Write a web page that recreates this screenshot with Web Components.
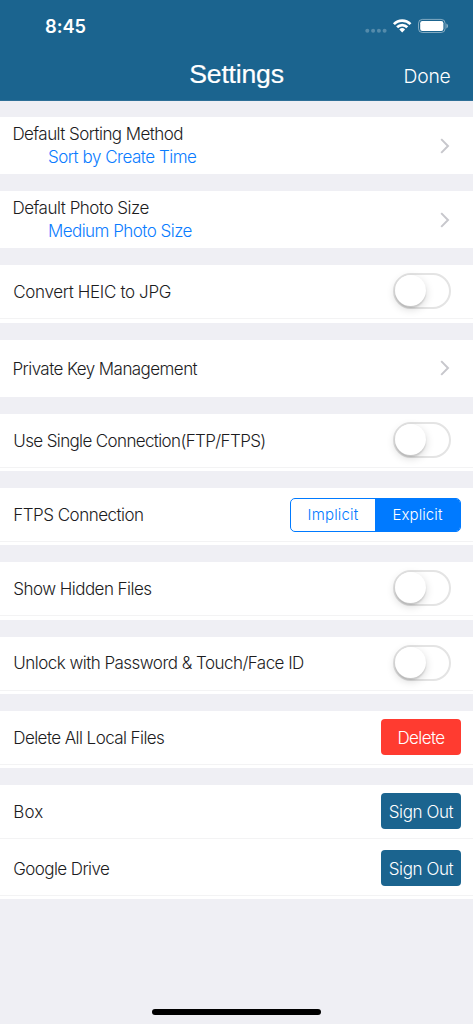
<!DOCTYPE html>
<html lang="en">
<head>
<meta charset="utf-8">
<title>Settings</title>
<style>
html, body { margin: 0; height: 100%; overflow: hidden; background: #efeff4; }
body { font-family: Inter, "Liberation Sans", sans-serif; color: #1c1c1e; }
</style>
</head>
<body>
<settings-screen></settings-screen>
<script>
const define = (name, html, init) => {
  const template = document.createElement('template');
  template.innerHTML = html;
  customElements.define(name, class extends HTMLElement {
    connectedCallback() {
      if (this.shadowRoot) return;
      this.attachShadow({ mode: 'open' }).append(template.content.cloneNode(true));
      if (init) init.call(this, this.shadowRoot);
    }
  });
};

// A single line of text whose tracking is adjusted to a given measure.
define('tracked-text', `
<style>
:host { display: block; white-space: nowrap; }
span { display: inline-block; }
</style><span><slot></slot></span>`, function (root) {
  const span = root.querySelector('span');
  const measure = parseFloat(this.getAttribute('measure'));
  const count = this.textContent.length;
  const natural = span.getBoundingClientRect().width;
  span.style.letterSpacing = ((measure - natural) / count).toFixed(3) + 'px';
});

define('status-bar', `
<style>
:host { display: flex; justify-content: space-between; height: 52px; padding: 0 25px 0 45px; box-sizing: border-box; }
tracked-text { font-weight: 600; font-size: 18.3px; line-height: 20px; padding-top: 16px; }
svg { display: block; margin-top: 16px; }
</style>
<tracked-text measure="41">8:45</tracked-text>
<svg width="84" height="20" viewBox="364 16 84 20" fill="none">
  <g fill="#fff" fill-opacity=".25"><circle cx="367.3" cy="30.8" r="2"/><circle cx="373.1" cy="30.8" r="2"/><circle cx="378.9" cy="30.8" r="2"/><circle cx="384.6" cy="30.8" r="2"/></g>
  <g stroke="#fff" stroke-width="2.7"><path d="M393.9 24.1a11.6 11.6 0 0 1 16.6 0"/><path d="M397.1 27.3a7.1 7.1 0 0 1 10.2 0"/></g>
  <path fill="#fff" d="M399.3 29.5a4.1 4.1 0 0 1 5.8 0l-2.9 3.1z"/>
  <rect x="418.5" y="19.4" width="26.6" height="13.1" rx="3.9" stroke="#fff" stroke-opacity=".45"/>
  <rect x="420.2" y="21" width="23.2" height="9.9" rx="2.2" fill="#fff"/>
  <path fill="#fff" fill-opacity=".5" d="M446.4 23.6c2.1.7 2.1 4.1 0 4.8z"/>
</svg>`);

define('nav-bar', `
<style>
:host { display: block; height: 101px; box-sizing: border-box; background: #1b648f; color: #fff; border-bottom: 1px solid #2e6f97; }
.bar { display: grid; grid-template-columns: 1fr auto 1fr; align-items: start; height: 48px; padding: 0 22.5px; }
.title { grid-column: 2; font: 26.6px/30px "Liberation Sans", sans-serif; padding-top: 7px; -webkit-text-stroke: .2px #fff; }
.done { justify-self: end; font-weight: 300; font-size: 19.3px; line-height: 24px; padding-top: 12px; }
</style>
<status-bar></status-bar>
<div class="bar"><tracked-text class="title" measure="94.5">Settings</tracked-text><tracked-text class="done" measure="47">Done</tracked-text></div>`);

define('chevron-icon', `
<style>:host { display: block; } svg { display: block; }</style>
<svg width="10" height="16" viewBox="0 0 10 16" fill="none" stroke="#c7c7cc" stroke-width="2"><path d="M1.2 1.1 8 8 1.2 14.9"/></svg>`);

define('toggle-switch', `
<style>
:host { display: block; box-sizing: border-box; width: 58px; height: 36px; border: 2px solid #e4e4e4; border-radius: 18px; margin-right: 10px; }
i { display: block; width: 31px; height: 31px; border-radius: 50%; background: #fff; box-shadow: 0 3px 8px rgba(0,0,0,.17), 0 2px 1.5px rgba(0,0,0,.12); }
</style><i></i>`);

define('segmented-control', `
<style>
:host { display: grid; grid-template-columns: 84px 1fr; box-sizing: border-box; width: 171px; height: 34px; margin-top: 1px; border: 1px solid #007aff; border-radius: 5px; overflow: hidden; color: #007aff; font-size: 15px; line-height: 32px; }
div { display: flex; justify-content: center; height: 32px; }
.on { background: #007aff; color: #fff; }
</style>
<div><tracked-text measure="51">Implicit</tracked-text></div><div class="on"><tracked-text measure="50">Explicit</tracked-text></div>`);

define('action-button', `
<style>
:host { display: flex; align-items: center; justify-content: center; box-sizing: border-box; width: 80px; height: 36.5px; padding-top: 1.6px; border-radius: 4px; background: #1b648f; color: #fff; font-weight: 300; font-size: 17px; line-height: 22px; }
:host([danger]) { background: #ff3b30; }
</style><slot></slot>`);

define('settings-row', `
<style>
:host { display: flex; flex-direction: column; height: 57.1px; background: #fff; font-size: 17px; line-height: 22.7px; font-weight: 300; }
.line { display: flex; box-sizing: border-box; align-items: center; justify-content: space-between; height: 53px; padding: 0 12px 1px 13.3px; }
.text { padding-top: 2px; }
.rule { height: 1px; background: #f3f3f4; }
:host([link]) .line { height: 57.1px; padding: 0 23px 0 12.4px; }
:host([link]) .rule { display: none; }
:host([double]) .text { padding-top: .8px; }
:host([link]:not([double])) .text { padding-top: 3px; }
::slotted([slot=detail]) { color: #0a7cff; padding-left: 35.5px; }
</style>
<div class="line"><div class="text"><slot></slot><slot name="detail"></slot></div><slot name="control"></slot></div><div class="rule"></div>`);

define('settings-group', `
<style>:host { display: block; }</style><slot></slot>`);

define('home-indicator', `
<style>:host { display: block; width: 169px; height: 6px; border-radius: 3px; background: #000; }</style>`);

define('settings-screen', `
<style>
:host { display: flex; flex-direction: column; width: 473px; height: 1024px; background: #efeff4; }
main { display: flex; flex-direction: column; gap: 17.15px; padding-top: 16px; flex: 1; }
home-indicator { align-self: center; margin-bottom: 9px; }
</style>
<nav-bar></nav-bar>
<main>
<settings-group><settings-row link double><tracked-text measure="170.5">Default Sorting Method</tracked-text><tracked-text slot="detail" measure="148.5">Sort by Create Time</tracked-text><chevron-icon slot="control"></chevron-icon></settings-row></settings-group>
<settings-group><settings-row link double><tracked-text measure="136.5">Default Photo Size</tracked-text><tracked-text slot="detail" measure="144">Medium Photo Size</tracked-text><chevron-icon slot="control"></chevron-icon></settings-row></settings-group>
<settings-group><settings-row><tracked-text measure="157.7">Convert HEIC to JPG</tracked-text><toggle-switch slot="control"></toggle-switch></settings-row></settings-group>
<settings-group><settings-row link><tracked-text measure="184.7">Private Key Management</tracked-text><chevron-icon slot="control"></chevron-icon></settings-row></settings-group>
<settings-group><settings-row><tracked-text measure="252.3">Use Single Connection(FTP/FTPS)</tracked-text><toggle-switch slot="control"></toggle-switch></settings-row></settings-group>
<settings-group><settings-row><tracked-text measure="130.3">FTPS Connection</tracked-text><segmented-control slot="control"></segmented-control></settings-row></settings-group>
<settings-group><settings-row><tracked-text measure="138.2">Show Hidden Files</tracked-text><toggle-switch slot="control"></toggle-switch></settings-row></settings-group>
<settings-group><settings-row><tracked-text measure="290.5">Unlock with Password &amp; Touch/Face ID</tracked-text><toggle-switch slot="control"></toggle-switch></settings-row></settings-group>
<settings-group><settings-row><tracked-text measure="151">Delete All Local Files</tracked-text><action-button slot="control" danger><tracked-text measure="47">Delete</tracked-text></action-button></settings-row></settings-group>
<settings-group><settings-row><tracked-text measure="30">Box</tracked-text><action-button slot="control"><tracked-text measure="64.5">Sign Out</tracked-text></action-button></settings-row><settings-row><tracked-text measure="96">Google Drive</tracked-text><action-button slot="control"><tracked-text measure="64.5">Sign Out</tracked-text></action-button></settings-row></settings-group>
</main>
<home-indicator></home-indicator>`);
</script>
</body>
</html>
